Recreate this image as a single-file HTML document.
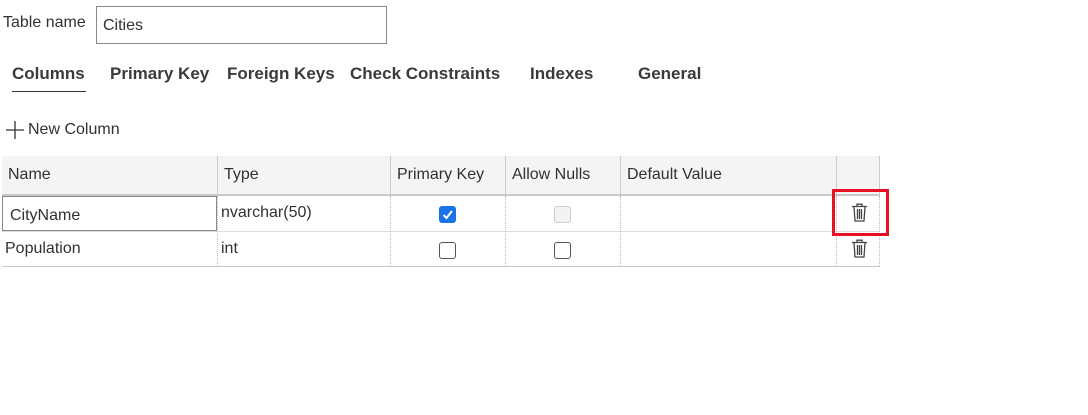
<!DOCTYPE html>
<html><head><style>
body{margin:0;width:1088px;height:415px;background:#fff;font-family:"Segoe UI","Liberation Sans",sans-serif;color:#323130;position:relative;overflow:hidden}
.a{position:absolute;white-space:nowrap}
.tab{position:absolute;top:64px;font-size:17px;font-weight:bold;color:#3b3a39}
.h{position:absolute;top:156px;height:38px;background:#f4f4f4}
.vl{position:absolute;width:0}
.cb{position:absolute;width:17px;height:17px;border:1px solid #555;border-radius:3px;box-sizing:border-box}
.cell{position:absolute;font-size:16px}
</style></head><body>
<div class="a" style="left:3px;top:14px;font-size:16px">Table name</div>
<div class="a" style="left:96px;top:6px;width:289px;height:36px;border:1px solid #8a8886"></div>
<div class="a" style="left:103px;top:17px;font-size:16px">Cities</div>
<div class="tab" style="left:12px">Columns</div>
<div class="a" style="left:12px;top:91px;width:74px;height:1px;background:#333"></div>
<div class="tab" style="left:110px">Primary Key</div>
<div class="tab" style="left:227px">Foreign Keys</div>
<div class="tab" style="left:350px">Check Constraints</div>
<div class="tab" style="left:530px">Indexes</div>
<div class="tab" style="left:638px">General</div>
<svg class="a" style="left:6px;top:121px" width="18" height="18"><path d="M9 0V18M0 9H18" stroke="#333" stroke-width="1.3"/></svg>
<div class="a" style="left:28px;top:121px;font-size:16px">New Column</div>

<div class="h" style="left:2px;width:878px"></div>
<div class="a" style="left:2px;top:194px;width:878px;height:2px;background:#c8c8c8"></div>
<div class="a" style="left:2px;top:231px;width:878px;height:1px;background:#ddd"></div>
<div class="a" style="left:2px;top:266px;width:878px;height:1px;background:#c8c8c8"></div>
<div class="vl" style="left:217px;top:156px;height:38px;border-left:1px solid #ccc"></div>
<div class="vl" style="left:390px;top:156px;height:38px;border-left:1px solid #ccc"></div>
<div class="vl" style="left:505px;top:156px;height:38px;border-left:1px solid #ccc"></div>
<div class="vl" style="left:620px;top:156px;height:38px;border-left:1px solid #ccc"></div>
<div class="vl" style="left:836px;top:156px;height:38px;border-left:1px solid #ccc"></div>
<div class="vl" style="left:879px;top:156px;height:38px;border-left:1px solid #ccc"></div>
<div class="vl" style="left:217px;top:196px;height:70px;border-left:1px dotted #bbb"></div>
<div class="vl" style="left:390px;top:196px;height:70px;border-left:1px dotted #bbb"></div>
<div class="vl" style="left:505px;top:196px;height:70px;border-left:1px dotted #bbb"></div>
<div class="vl" style="left:620px;top:196px;height:70px;border-left:1px dotted #bbb"></div>
<div class="vl" style="left:836px;top:196px;height:70px;border-left:1px dotted #bbb"></div>
<div class="vl" style="left:879px;top:196px;height:70px;border-left:1px dotted #bbb"></div>

<div class="cell" style="left:8px;top:166px">Name</div>
<div class="cell" style="left:224px;top:166px">Type</div>
<div class="cell" style="left:397px;top:166px">Primary Key</div>
<div class="cell" style="left:512px;top:166px">Allow Nulls</div>
<div class="cell" style="left:627px;top:166px">Default Value</div>

<div class="a" style="left:2px;top:196px;width:215px;height:35px;border:1px solid #8a8886;box-sizing:border-box"></div>
<div class="cell" style="left:10px;top:207px">CityName</div>
<div class="cell" style="left:221px;top:204px">nvarchar(50)</div>
<div class="cb" style="left:439px;top:206px;background:#1a73e8;border-color:#1a73e8"><svg width="15" height="15" style="position:absolute;left:0;top:0"><path d="M3.5 8L6.5 11L12 4" stroke="#fff" stroke-width="2" fill="none"/></svg></div>
<div class="cb" style="left:554px;top:206px;background:#f3f3f3;border-color:#ccc"></div>
<div class="cell" style="left:5px;top:240px">Population</div>
<div class="cell" style="left:221px;top:240px">int</div>
<div class="cb" style="left:439px;top:242px"></div>
<div class="cb" style="left:554px;top:242px"></div>

<div class="a" style="left:832px;top:189px;width:57px;height:47px;border:3px solid #e81123;box-sizing:border-box"></div>
<svg class="a" style="left:851px;top:203px" width="17" height="19"><path d="M1 3.5H16M6 3V1.2H11V3M3 4L4 18H13L14 4M6.5 6V16M8.5 6V16M10.5 6V16" stroke="#444" stroke-width="1.3" fill="none"/></svg>
<svg class="a" style="left:851px;top:239px" width="17" height="19"><path d="M1 3.5H16M6 3V1.2H11V3M3 4L4 18H13L14 4M6.5 6V16M8.5 6V16M10.5 6V16" stroke="#444" stroke-width="1.3" fill="none"/></svg>
</body></html>
